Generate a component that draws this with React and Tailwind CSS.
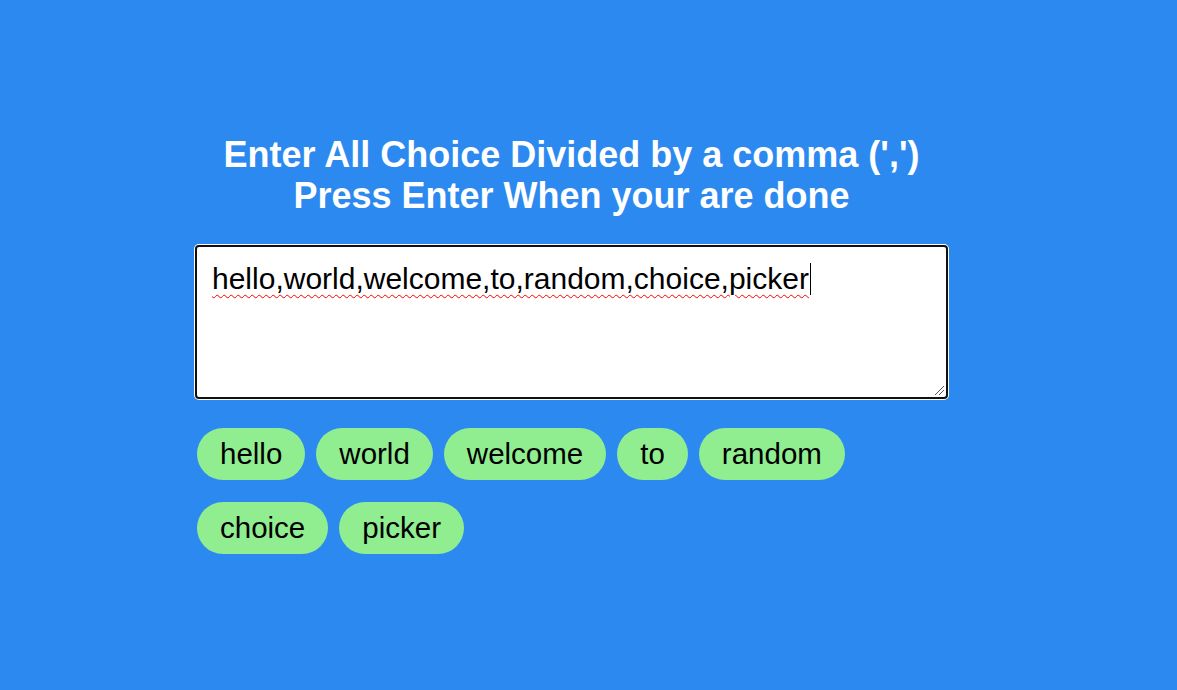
import { useState } from 'react'

const CHOICES = ['hello', 'world', 'welcome', 'to', 'random', 'choice', 'picker']

export default function App() {
  const [value] = useState(CHOICES.join(','))

  return (
    <div className="min-h-[690px] bg-[#2c89ef] font-['Liberation_Sans',Arial,sans-serif] pt-[134px]">
      <div className="ml-[194px] w-[755px]">
        <h1 className="text-center text-white font-bold text-[36px] leading-[41px]">
          Enter All Choice Divided by a comma (',')
          <br />
          Press Enter When your are done
        </h1>

        {/* Input box (drawn focused) */}
        <div className="mt-[28px] relative h-[156px] rounded-[5px] bg-white p-px">
          <div className="relative h-full rounded-[4px] border-2 border-[#101010] bg-white pl-[15px] pt-[15px]">
            <span className="text-[30px] leading-[34px] text-black underline decoration-wavy decoration-[#ff0000] decoration-1 underline-offset-[5px]">
              {value}
            </span>
            <span className="inline-block align-[-6px] ml-[1px] w-px h-[32px] bg-black" />
            <svg className="absolute right-[1px] bottom-[1px]" width="12" height="12" viewBox="0 0 12 12">
              <path d="M11 2 L2 11 M11 6 L6 11" stroke="#555" strokeWidth="1" />
            </svg>
          </div>
        </div>

        <div className="mt-[28px] ml-[3px] flex flex-wrap gap-x-[11px] gap-y-[22px]">
          {CHOICES.map((c) => (
            <span
              key={c}
              className="h-[52px] px-[23px] flex items-center rounded-full bg-[#90ee90] text-black text-[29.5px]"
            >
              {c}
            </span>
          ))}
        </div>
      </div>
    </div>
  )
}
